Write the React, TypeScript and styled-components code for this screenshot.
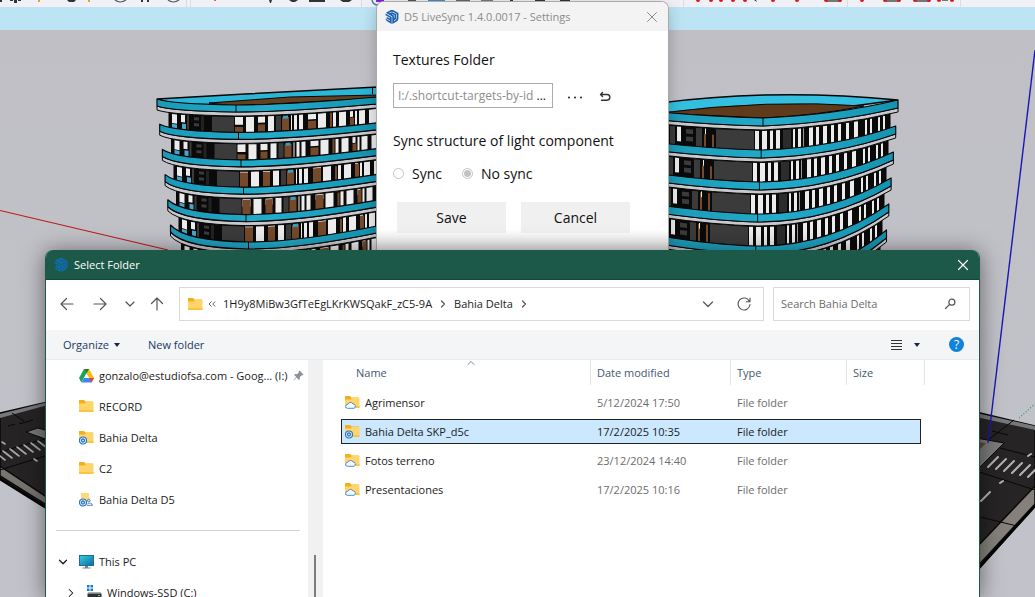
import React from 'react';
import styled, { createGlobalStyle } from 'styled-components';
import { SiSketchup } from 'react-icons/si';

const GlobalStyle = createGlobalStyle`
  *, *::before, *::after { box-sizing: border-box; }
  body { margin: 0; background: #c0c0c6; font-family: "Open Sans", "Noto Sans", sans-serif; font-size: 11px; line-height: 16px; color: #1b1b1b; }
  button, input { font: inherit; color: inherit; }
  button { border: 0; padding: 0; background: none; cursor: pointer; }
`;

const Desktop = styled.div`
  position: relative;
  height: 100vh;
  overflow: hidden;
`;

const Scene = styled.svg`
  display: block;
  width: 100%;
  height: 100%;
`;

/* ---------- 3D viewport ---------- */

type Point = [number, number];
type Curve = [Point, Point, Point];

const at = (c: Curve, x: number): Point => {
  let lo = 0;
  let hi = 1;
  for (let i = 0; i < 20; i++) {
    const t = (lo + hi) / 2;
    const px = (1 - t) * (1 - t) * c[0][0] + 2 * t * (1 - t) * c[1][0] + t * t * c[2][0];
    if (px < x) lo = t;
    else hi = t;
  }
  const t = lo;
  return [x, (1 - t) * (1 - t) * c[0][1] + 2 * t * (1 - t) * c[1][1] + t * t * c[2][1]];
};

const ribbon = (a: Curve, b: Curve, top: number, bottom: number) => {
  const p = (q: Point, d: number) => `${q[0]} ${q[1] + d}`;
  return `M${p(a[0], top)} Q${p(a[1], top)} ${p(a[2], top)} Q${p(b[1], top)} ${p(b[2], top)} L${p(b[2], bottom)} Q${p(b[1], bottom)} ${p(b[0], bottom)} Q${p(a[1], bottom)} ${p(a[0], bottom)} Z`;
};

type Pane = [x: number, w: number, fill: string, from: number, to: number];
const W = '#ececec';
const B = '#75492a';
const G = '#3b3b3b';

const leftPanes: Pane[] = [
  [172, 5, W, 0, 0.65], [172, 5, '#4aa5c8', 0.7, 1], [181, 4, W, 0, 0.5], [182, 4, '#4aa5c8', 0.6, 1],
  [187, 2, G, 0, 1], [194, 5, G, 0.1, 0.3], [194, 5, G, 0.5, 0.7], [201, 3, '#222', 0, 1], [212, 22, G, 0, 1],
  [235, 8, W, 0, 0.5], [235, 8, B, 0.65, 1], [246, 8, W, 0, 1], [258, 7, W, 0, 0.4], [258, 7, B, 0.5, 1],
  [268, 6, W, 0, 1], [276, 5, G, 0, 1], [282, 7, B, 0.1, 1], [283, 5, '#389bb8', 0, 0.2], [291, 1, W, 0, 1], [294, 3, W, 0, 1], [299, 4, W, 0, 1],
  [308, 8, W, 0, 0.35], [308, 8, B, 0.45, 1], [318, 8, W, 0, 1], [330, 2, B, 0, 1], [333, 3, W, 0, 1],
  [339, 7, W, 0, 1], [350, 3, W, 0, 0.4], [350, 4, B, 0.45, 1], [355, 2, W, 0, 1], [359, 6, W, 0, 1], [369, 7, W, 0, 1],
];

const rightPanes: Pane[] = [
  [670, 5, G, 0, 1], [677, 4, W, 0, 0.8], [686, 7, G, 0.1, 0.35], [686, 7, G, 0.5, 0.75], [696, 6, G, 0, 1],
  [704, 2, B, 0.3, 1], [712, 2, B, 0.3, 1], [705, 1, W, 0, 0.3], [716, 38, G, 0, 1], [755, 4, W, 0, 1], [762, 5, W, 0, 1],
  [770, 3, W, 0, 1], [776, 4, W, 0, 1], [783, 8, '#2c2c2c', 0, 1], [793, 2, W, 0, 1], [798, 3, W, 0, 1], [803, 1, '#999', 0, 1],
  [809, 4, W, 0, 1], [816, 3, W, 0, 1], [823, 4, W, 0, 1], [831, 3, W, 0, 1], [838, 3, W, 0, 1],
  [846, 3, W, 0, 1], [854, 4, W, 0, 1], [865, 2, W, 0, 1], [870, 2, W, 0, 1], [878, 2, W, 0, 1], [883, 2, W, 0, 1],
];

const leftFloor = (k: number): [Curve, Curve] => {
  const l: Point = [157 + 2.7 * k, 99 + 25.2 * k];
  const c: Point = [236 + 2.5 * k, 105 + 27.4 * k];
  const r: Point = [377, 97 + 25.8 * k];
  return [
    [l, [l[0] + 14, c[1] - 1], c],
    [c, [c[0] + 50, c[1]], r],
  ];
};

const rightFloor = (k: number): [Curve, Curve] => {
  const l: Point = [660, 112 + 31 * k];
  const c: Point = [763 - 1.8 * k, 118 + 32 * k];
  const r: Point = [898 - 2.3 * k, 100 + 26 * k];
  return [
    [l, [715, c[1] - 1], c],
    [c, [c[0] + 72, c[1] - 3 + k], r],
  ];
};

interface TowerProps {
  floor: (k: number) => [Curve, Curve];
  panes: Pane[];
  shift: number;
  wall: [number, number];
  band: number;
}

function Tower({ floor, panes, shift, wall, band }: TowerProps) {
  const floors = [0, 1, 2, 3, 4, 5];
  const yAt = (k: number, x: number) => {
    const [a, b] = floor(k);
    return x < a[2][0] ? at(a, x)[1] : at(b, x)[1];
  };
  return (
    <g stroke="#060606" strokeLinejoin="round">
      {floors.map((k) => {
        const x0 = wall[0] + shift * k;
        const x1 = wall[1] + Math.min(shift, 0) * k;
        const xs = Array.from({ length: 13 }, (_, i) => x0 + ((x1 - x0) * i) / 12);
        const pts = [
          ...xs.map((x) => `${x},${yAt(k, x) + band}`),
          ...xs.slice().reverse().map((x) => `${x},${yAt(k + 1, x) + 3}`),
        ].join(' ');
        return (
          <g key={k}>
            <polygon points={pts} fill="#0a0a0a" />
            {panes.map(([px, w, fill, from, to], i) => {
              const x = px + shift * k;
              const e = Math.min(x + w, x1);
              if (e <= x) return null;
              const start = fill === B && k > 1 ? 0.05 : from;
              const edge = (q: number, f: number) => {
                const t = yAt(k, q) + band + 5;
                const b = yAt(k + 1, q);
                return t + (b - t) * f;
              };
              return (
                <polygon
                  key={i}
                  stroke="none"
                  fill={fill}
                  points={`${x},${edge(x, start)} ${e},${edge(e, start)} ${e},${edge(e, to)} ${x},${edge(x, to)}`}
                />
              );
            })}
          </g>
        );
      })}
      {floors.map((k) => {
        const [a, b] = floor(k);
        return (
          <g key={k}>
            <path d={ribbon(a, b, band, band + 4)} fill="#c9c8cc" strokeWidth="1" />
            <path d={ribbon(a, b, 0, band)} fill="url(#band)" strokeWidth="1.2" />
            <path d={`M${a[2][0]} ${a[2][1]}v${band}`} strokeWidth="1" />
          </g>
        );
      })}
    </g>
  );
}

const leftBars = [0, 1, 2, 3, 4, 5, 6];
const rightBars = [0, 1, 2, 3, 4, 5, 6, 7];
const redDots = [698, 711, 721, 733, 745, 773, 797, 826, 840, 862, 885, 899, 915, 929, 939, 952];

function Viewport() {
  return (
    <Scene viewBox="0 0 1035 597" preserveAspectRatio="xMidYMin slice" aria-hidden="true">
      <defs>
        <linearGradient id="ground" x1="0" y1="0" x2="0" y2="1">
          <stop offset="0" stopColor="#bfbfc5" />
          <stop offset="1" stopColor="#c2c2ca" />
        </linearGradient>
        <linearGradient id="band" x1="0" y1="0" x2="1" y2="0">
          <stop offset="0" stopColor="#1a9ab8" />
          <stop offset="0.5" stopColor="#23abca" />
          <stop offset="1" stopColor="#1493b0" />
        </linearGradient>
      </defs>
      <rect width="1035" height="597" fill="url(#ground)" />
      <rect y="7" width="1035" height="23" fill="#bde4f4" />
      <rect width="1035" height="7" fill="#f1f0f6" />
      <path d="M186.500 0v7M190.500 0v7M361.500 0v7M683.500 0v7M847.500 0v7M960.500 0v7" stroke="#dcdbe1" />
      <g fill="#333">
        <path d="M0 0h2v2H0zM10 0h3v1h-3zM14 0h3v3h-3zM18 0h3v1h-3zM67 0h9l-2 2h-5zM141 0h2v2h-2zM147 0h2v2h-2zM269 0h3l-1 3h-1zM289 0h9l-3 2h-3zM309 0h16v2h-16zM340 0h12l-3 2h-6z" />
        <path d="M115 0q5 4 11 0M168 0q5 4 11 0" fill="none" stroke="#555" strokeWidth="1.200" />
        <path d="M826 0h15v2h-15zM886 0h14v2h-14zM916 0h14v2h-14zM942 0h6v1h-6z" fill="#777" />
        <path d="M754 0l3 2-1-2z" />
      </g>
      <path d="M39 0v2M89 0v2" stroke="#f0a020" strokeWidth="2" />
      <circle cx="215" cy="0" r="1" fill="#d32" />
      <path d="M372 0q1 6 8 5" fill="none" stroke="#3e7fc4" strokeWidth="1.500" />
      <g fill="#333">
        <rect x="376" width="8" height="2" fill="#8a1be0" />
        <rect x="408" width="8" height="1" fill="#555" />
        <rect x="428" width="17" height="2" fill="#4a86c8" />
        <rect x="456" width="14" height="1" fill="#666" />
        <rect x="481" width="12" height="1" fill="#777" />
        <rect x="510" width="3" height="1" />
        <rect x="535" width="10" height="1" />
        <rect x="560" width="10" height="1" />
      </g>
      <g fill="#e01414">
        {redDots.map((x) => <circle key={x} cx={x} cy="0" r="2" />)}
      </g>

      <path d="M0 210.500L168 250" stroke="#c01818" strokeWidth="1.200" />

      <path d="M157 99L245 94L377 87V97L236 105L175 104Z" fill="#2bb5d6" stroke="#060606" strokeWidth="1.500" />
      <path d="M209 103L290 97L377 95V98L236 106Z" fill="#65401f" stroke="#060606" />
      <Tower floor={leftFloor} panes={leftPanes} shift={2.5} wall={[169, 377]} band={7} />
      <path d="M372.500 88v6" stroke="#060606" />

      <path d="M660 103Q775 88 898 100L763 118L660 112Z" fill="#34bfe0" stroke="#060606" strokeWidth="1.500" />
      <path d="M660 113Q770 99 864 106Q820 115 763 118Z" fill="#5f3a1b" stroke="#060606" />
      <Tower floor={rightFloor} panes={rightPanes} shift={-2} wall={[660, 890]} band={8} />

      <path d="M0 413L48 402V508L0 479Z" fill="#262325" stroke="#0a0a0a" strokeWidth="1.500" />
      <path d="M0 414L48 402V405L0 418Z" fill="#77787a" />
      <path d="M26 432L38 428L48 431V440Z" fill="#77787a" stroke="#0a0a0a" />
      <path d="M0 466L48 498V506L0 476Z" fill="#77736f" stroke="#0a0a0a" strokeWidth="1.500" />
      <path d="M0 479L48 509" stroke="#050505" strokeWidth="2.500" />
      <path d="M0 452L48 438M0 470L48 455M12 413L24 421M8 426l7-2M19 424l14-4" stroke="#080808" />
      <g stroke="#a8a8ab" strokeWidth="1.600" strokeLinecap="round">
        {leftBars.map((i) => <path key={i} d={`M${-4 + i * 7} ${453 - i * 2}l9 7`} />)}
        <path d="M34 459l3 2M2 442l3 2" />
      </g>

      <path d="M976 412L1035 426V506L976 572Z" fill="#272426" stroke="#0a0a0a" strokeWidth="1.500" />
      <path d="M976 413L1035 426V430L976 417Z" fill="#77787a" />
      <path d="M976 438L1004 443L978 469L976 467Z" fill="#7b7b7c" stroke="#0a0a0a" />
      <path d="M976 442L986 443L980 449H976Z" fill="#66472c" />
      <path d="M1035 486L976 548V568L1035 504Z" fill="#85807b" stroke="#0a0a0a" strokeWidth="1.500" />
      <path d="M1035 506L976 571" stroke="#050505" strokeWidth="2.500" />
      <path d="M988 440L1014 420M1000 448L1035 457M976 471L1035 490M980 517L1017 526M992 431l16 4" stroke="#080808" />
      <g stroke="#b4b4b7" strokeWidth="2" strokeLinecap="round">
        {rightBars.map((i) => <path key={i} d={`M${988 + i * 8} ${467 + i * 2}l10-10`} />)}
        <path d="M981 501l9-9M1000 483l3-2M1028 456l3-2" />
      </g>
      <path d="M1035 50L988 443" stroke="#1818b4" strokeWidth="1.400" />
      <path d="M1019 418L1035 404" stroke="#18a04a" strokeWidth="1.200" strokeDasharray="1 2" />
    </Scene>
  );
}

/* ---------- Icons ---------- */

const Glyph = styled.svg<{ $weight: number }>`
  display: block;
  flex: none;
  fill: none;
  stroke: currentColor;
  stroke-width: ${(p) => p.$weight};
  stroke-linecap: round;
  stroke-linejoin: round;
`;

function Icon({ d, size = 16, weight = 1.2 }: { d: string; size?: number; weight?: number }) {
  return (
    <Glyph width={size} height={size} viewBox="0 0 16 16" aria-hidden="true" $weight={weight}>
      <path d={d} />
    </Glyph>
  );
}

const arrowLeft = 'M14 8H2M7.500 2.500L2 8l5.500 5.500';
const arrowRight = 'M2 8h12M8.500 2.500L14 8l-5.500 5.500';
const arrowUp = 'M8 14V2M2.500 7.500L8 2l5.500 5.500';
const chevronDown = 'M4 6l4 4 4-4';
const chevronRight = 'M6 4l4 4-4 4';
const cross = 'M3.500 3.500l9 9M12.500 3.500l-9 9';

type Badge = 'none' | 'sync' | 'cloud' | 'shared';

function Folder({ badge = 'none' }: { badge?: Badge }) {
  return (
    <svg width="15" height="15" viewBox="0 0 15 15" aria-hidden="true">
      {badge === 'shared' ? (
        <>
          <path d="M2 1h8v3l1 6H2z" fill="#ffd97a" />
          <path d="M8.500 8.500a1.300 1.300 0 102.600 0 1.300 1.300 0 00-2.600 0M8 13.300h5.500c-.3-2.400-3.500-2.800-5-1.500" fill="none" stroke="#5a83b8" />
        </>
      ) : (
        <>
          <path d="M0 1h5l1.500 1.500H14V7H0z" fill="#f3af1b" />
          <path d="M0 4.500h5.500L7 3h7.500v10H0z" fill="#ffd569" />
          <path d="M0 11h14.500v2H0z" fill="#fbc544" />
        </>
      )}
      {(badge === 'sync' || badge === 'shared') && (
        <>
          <circle cx="4" cy="10.500" r="3.500" fill="#eaf3fc" stroke="#2777cf" strokeWidth="1.200" />
          <circle cx="4" cy="10.500" r="1.500" fill="none" stroke="#2777cf" strokeWidth="1.300" />
        </>
      )}
      {badge === 'cloud' && (
        <path d="M2.500 13.300a2 2 0 01.2-4 3 3 0 015.300-.4 2.300 2.300 0 011 4.400z" fill="#f5faff" stroke="#4a8fd8" />
      )}
    </svg>
  );
}

function DriveLogo() {
  return (
    <svg width="15" height="14" viewBox="0 0 15 14" aria-hidden="true">
      <path d="M5 0h5L4 10.500 2.300 13.500 0 9z" fill="#1ca45c" />
      <path d="M5 0h5l5 9h-5z" fill="#fbbc05" />
      <path d="M5 0h5L7.500 4.500z" fill="#188038" />
      <path d="M5 9h10l-2.500 4.500h-10z" fill="#4285f4" />
      <path d="M10.300 9H15l-2.500 4.500z" fill="#ea4335" />
      <path d="M7.500 4.700L10 9H5z" fill="#fff" />
    </svg>
  );
}

function Monitor() {
  return (
    <svg width="15" height="14" viewBox="0 0 15 14" aria-hidden="true">
      <defs>
        <linearGradient id="screen" x1="0" y1="0" x2="1" y2="1">
          <stop offset="0" stopColor="#35d0dc" />
          <stop offset="1" stopColor="#0c68a8" />
        </linearGradient>
      </defs>
      <rect x="0.500" y="0.500" width="14" height="10" fill="url(#screen)" stroke="#1c6f93" />
      <path d="M6 11h3v1.500h2.500v1h-8v-1H6z" fill="#76818c" />
    </svg>
  );
}

function Drive() {
  return (
    <svg width="15" height="15" viewBox="0 0 15 15" aria-hidden="true">
      <path d="M0 0h2.500v2.500H0zM3.500 0H6v2.500H3.500zM0 3.500h2.500V6H0zM3.500 3.500H6V6H3.500z" fill="#0f7bd8" />
      <path d="M1.500 7h12l1 1.500H.5z" fill="#aab0b5" />
      <path d="M.5 8.500h14V12H.5z" fill="#2e3032" />
      <path d="M11 10h2v1h-2z" fill="#4fe07a" />
    </svg>
  );
}

function Pin() {
  return (
    <svg width="11" height="11" viewBox="0 0 11 11" aria-hidden="true">
      <path d="M6.500.5l4 4-1 .8-1 .1-1.700 1.700.1 2-1 .8L3.600 7.500.700 10.500l.2-1L3.200 7 1.200 5l.8-1 2 .2 1.800-1.800V1.300z" fill="#8b9198" />
    </svg>
  );
}

/* ---------- Settings dialog ---------- */

const SettingsWindow = styled.section`
  position: absolute;
  top: 2px;
  left: 377px;
  width: 291px;
  height: 260px;
  border-radius: 7px 7px 0 0;
  background: linear-gradient(#fff 228px, #e4e4e4 250px);
  box-shadow: 0 0 0 1px #a9a9ac, 0 4px 16px rgba(0, 0, 0, 0.25);
  overflow: hidden;
`;

const SettingsTitle = styled.header`
  display: flex;
  align-items: center;
  gap: 5px;
  height: 29px;
  padding: 0 8px;
  background: #f3f3f3;
  color: #8b8b8b;

  h1 { flex: 1; margin: 0; font: inherit; }
  svg { flex: none; }
`;

const SettingsForm = styled.form`
  display: flex;
  flex-direction: column;
  padding: 18px 16px 0;
  font-size: 14px;
  line-height: 22px;
  color: #111;
`;

const PathRow = styled.div`
  display: flex;
  align-items: center;
  gap: 14px;
  margin: 12px 0 22px;
`;

const PathBox = styled.div`
  display: flex;
  align-items: center;
  width: 160px;
  height: 25px;
  padding: 0 6px 0 4px;
  border: 1px solid #ababab;
  font-size: 12px;

  input { flex: 1; min-width: 0; padding: 0; border: 0; background: none; color: #8d8d8d; outline: 0; }
`;

const PathButton = styled.button`
  display: flex;
  padding-top: 2px;
  color: #333;
`;

const Choices = styled.fieldset`
  display: flex;
  gap: 20px;
  margin: 0;
  padding: 0;
  border: 0;

  legend { padding: 0; margin-bottom: 11px; }
`;

const Choice = styled.label`
  display: flex;
  align-items: center;
  gap: 8px;
`;

const Radio = styled.input`
  appearance: none;
  width: 11px;
  height: 11px;
  margin: 0 0 2px;
  border: 1px solid #c4c4c4;
  border-radius: 50%;
  background: #fff;

  &:checked { background: radial-gradient(#c2c2c2 0 3px, #fff 4px); }
`;

const Actions = styled.div`
  display: flex;
  gap: 15px;
  padding: 17px 0 0 4px;
`;

const ActionButton = styled.button`
  width: 109px;
  height: 31px;
  background: #f0f0f0;
`;

/* ---------- Folder dialog ---------- */

const FolderWindow = styled.section`
  position: absolute;
  top: 250px;
  left: 45px;
  right: 55px;
  bottom: 0;
  display: flex;
  flex-direction: column;
  border: 1px solid #1d5949;
  border-width: 0 1px;
  border-radius: 8px 8px 0 0;
  background: #fff;
  box-shadow: 0 2px 22px rgba(0, 0, 0, 0.5);
  overflow: hidden;
`;

const FolderTitle = styled.header`
  display: flex;
  align-items: center;
  gap: 6px;
  flex: none;
  height: 30px;
  padding: 0 8px;
  background: #1d5949;
  border-bottom: 1px solid #164638;
  color: #fff;

  h2 { flex: 1; margin: 0; font: inherit; }
`;

const NavRow = styled.nav`
  display: flex;
  align-items: center;
  flex: none;
  height: 50px;
  padding: 0 9px 2px 10px;
  color: #555;
`;

const NavButtons = styled.div`
  display: flex;
  gap: 11px;
  width: 123px;
`;

const NavButton = styled.button<{ $wide?: boolean }>`
  display: flex;
  justify-content: center;
  width: ${(p) => (p.$wide ? 22 : 16)}px;
`;

const AddressBar = styled.div`
  display: flex;
  align-items: center;
  flex: 1;
  height: 34px;
  margin-right: 9px;
  padding: 0 11px 0 8px;
  border: 1px solid #d9d9d9;
`;

const Crumbs = styled.div`
  display: flex;
  align-items: center;
  flex: 1;
  gap: 5px;
  margin-left: 3px;

  button { color: #1b1b1b; }
`;

const TrailingButtons = styled.div`
  display: flex;
  gap: 20px;
`;

const SearchBox = styled.label`
  display: flex;
  align-items: center;
  width: 197px;
  height: 34px;
  padding: 0 13px 0 7px;
  border: 1px solid #d9d9d9;

  input { flex: 1; min-width: 0; padding: 0; border: 0; outline: 0; }
  input::placeholder { color: #6b6b6b; opacity: 1; }
`;

const CommandBar = styled.div`
  display: flex;
  align-items: center;
  flex: none;
  height: 30px;
  padding: 0 15px 0 17px;
  background: #f4f5f7;
  border-bottom: 1px solid #e9eaec;
  color: #1c3a63;
`;

const Command = styled.button`
  display: flex;
  align-items: center;
  gap: 5px;
  margin-right: 28px;
`;

const Caret = styled.span`
  border: 3px solid transparent;
  border-top: 4px solid #14244f;
  border-bottom: 0;
`;

const Spacer = styled.div`
  flex: 1;
`;

const ViewButton = styled.button`
  display: flex;
  align-items: center;
  gap: 12px;
  margin-right: 29px;
`;

const HelpButton = styled.button`
  width: 15px;
  height: 15px;
  border-radius: 50%;
  background: #1183dc;
  color: #fff;
  font-size: 12px;
  line-height: 15px;
`;

const Panes = styled.div`
  display: flex;
  flex: 1;
  min-height: 0;
`;

const Sidebar = styled.aside`
  width: 262px;
  overflow: hidden;
`;

const TreeItem = styled.button<{ $child?: boolean }>`
  display: flex;
  align-items: center;
  gap: 5px;
  width: 100%;
  height: 31px;
  padding-left: ${(p) => (p.$child ? 16 : 8)}px;
  white-space: nowrap;
`;

const Twist = styled.span`
  display: flex;
  width: 20px;
  padding-left: 2px;
`;

const Pinned = styled.span`
  display: flex;
`;

const Divider = styled.hr`
  height: 1px;
  margin: 15px 8px 15px 10px;
  border: 0;
  background: #d3d3d3;
`;

const ScrollTrack = styled.div`
  width: 15px;
  padding: 195px 6px 0;
  background: #f1f1f1;
`;

const ScrollThumb = styled.div`
  height: 100%;
  width: 2px;
  background: #7d7d7d;
`;

const Listing = styled.main`
  position: relative;
  flex: 1;
  margin-left: 2px;
  padding-left: 16px;
  overflow: hidden;
`;

const SortMark = styled.span`
  position: absolute;
  top: 0;
  left: 140px;
  color: #777;
`;

const FileTable = styled.table`
  width: 584px;
  table-layout: fixed;
  border-collapse: separate;
  border-spacing: 0;
  text-align: left;

  th {
    height: 30px;
    padding: 0 0 4px 6px;
    font-weight: 400;
    color: #44586f;
    background: linear-gradient(#e3e3e3, #e3e3e3) right top / 1px 25px no-repeat;
  }
  th:first-child { padding-left: 15px; }
`;

const FileRow = styled.tr<{ $selected: boolean }>`
  td {
    height: 29px;
    padding: 0 0 0 6px;
    border-bottom: 4px solid transparent;
    background: ${(p) => (p.$selected ? '#cce8ff' : 'transparent')} padding-box;
    color: ${(p) => (p.$selected ? '#1b1b1b' : '#6d6d6d')};
    box-shadow: ${(p) => (p.$selected ? 'inset 0 1px #222, inset 0 -1px #222' : 'none')};
  }
  td:first-child {
    padding-left: 4px;
    color: #1b1b1b;
    box-shadow: ${(p) => (p.$selected ? 'inset 1px 1px #222, inset 0 -1px #222' : 'none')};
  }
  td:last-child {
    border-right: 4px solid transparent;
    box-shadow: ${(p) => (p.$selected ? 'inset -1px -1px #222, inset 0 1px #222' : 'none')};
  }
`;

const FileName = styled.span`
  display: flex;
  align-items: center;
  gap: 5px;
`;

const files: { name: string; date: string; badge: Badge; selected?: boolean }[] = [
  { name: 'Agrimensor', date: '5/12/2024 17:50', badge: 'cloud' },
  { name: 'Bahia Delta SKP_d5c', date: '17/2/2025 10:35', badge: 'sync', selected: true },
  { name: 'Fotos terreno', date: '23/12/2024 14:40', badge: 'cloud' },
  { name: 'Presentaciones', date: '17/2/2025 10:16', badge: 'cloud' },
];

const quickFolders: { name: string; badge: Badge }[] = [
  { name: 'RECORD', badge: 'none' },
  { name: 'Bahia Delta', badge: 'sync' },
  { name: 'C2', badge: 'none' },
  { name: 'Bahia Delta D5', badge: 'shared' },
];

function Settings() {
  return (
    <SettingsWindow aria-label="Settings">
      <SettingsTitle>
        <SiSketchup size={14} color="#1b5fae" />
        <h1>D5 LiveSync 1.4.0.0017 - Settings</h1>
        <button type="button" aria-label="Close settings"><Icon d={cross} weight={1} /></button>
      </SettingsTitle>
      <SettingsForm onSubmit={(e) => e.preventDefault()}>
        <label htmlFor="textures">Textures Folder</label>
        <PathRow>
          <PathBox>
            <input id="textures" readOnly value="I:/.shortcut-targets-by-id" />
            <span>...</span>
          </PathBox>
          <PathButton type="button" aria-label="Browse">
            <svg width="16" height="16" viewBox="0 0 16 16" fill="#222">
              <circle cx="2" cy="8.500" r="1" /><circle cx="8" cy="8.500" r="1" /><circle cx="14" cy="8.500" r="1" />
            </svg>
          </PathButton>
          <PathButton type="button" aria-label="Reset">
            <Icon d="M5.500 3.500L3.500 5.500 5.500 7.500M3.500 5.500H10a2.800 2.800 0 010 5.700H4.500" weight={1.4} />
          </PathButton>
        </PathRow>
        <Choices>
          <legend>Sync structure of light component</legend>
          <Choice><Radio type="radio" name="sync" />Sync</Choice>
          <Choice><Radio type="radio" name="sync" defaultChecked />No sync</Choice>
        </Choices>
        <Actions>
          <ActionButton type="submit">Save</ActionButton>
          <ActionButton type="button">Cancel</ActionButton>
        </Actions>
      </SettingsForm>
    </SettingsWindow>
  );
}

function FolderPicker() {
  return (
    <FolderWindow aria-label="Select Folder">
      <FolderTitle>
        <SiSketchup size={14} color="#0f6cb0" />
        <h2>Select Folder</h2>
        <button type="button" aria-label="Close"><Icon d={cross} /></button>
      </FolderTitle>
      <NavRow>
        <NavButtons>
          <NavButton type="button" $wide aria-label="Back"><Icon d={arrowLeft} /></NavButton>
          <NavButton type="button" $wide aria-label="Forward"><Icon d={arrowRight} /></NavButton>
          <NavButton type="button" aria-label="Recent"><Icon d={chevronDown} /></NavButton>
          <NavButton type="button" aria-label="Up"><Icon d={arrowUp} /></NavButton>
        </NavButtons>
        <AddressBar>
          <Folder />
          <Crumbs>
            <Icon d="M7 5L4 8l3 3M12 5L9 8l3 3" size={12} />
            <button type="button">1H9y8MiBw3GfTeEgLKrKWSQakF_zC5-9A</button>
            <Icon d={chevronRight} size={12} weight={1.6} />
            <button type="button">Bahia Delta</button>
            <Icon d={chevronRight} size={12} weight={1.6} />
          </Crumbs>
          <TrailingButtons>
            <button type="button" aria-label="History"><Icon d="M3.500 6L8 10.500 12.500 6" /></button>
            <button type="button" aria-label="Refresh">
              <Icon d="M13.500 5.500A6 6 0 1014 8.500M14 2v3.700h-3.700" weight={1.1} />
            </button>
          </TrailingButtons>
        </AddressBar>
        <SearchBox>
          <input type="text" aria-label="Search" placeholder="Search Bahia Delta" />
          <Icon d="M7.500 8.500L2 14M14.500 5.500a4 4 0 11-8 0 4 4 0 018 0z" size={12} weight={1.6} />
        </SearchBox>
      </NavRow>
      <CommandBar>
        <Command type="button">Organize<Caret /></Command>
        <Command type="button">New folder</Command>
        <Spacer />
        <ViewButton type="button" aria-label="Change view">
          <svg width="11" height="12" viewBox="0 0 11 12" stroke="#333">
            <path d="M0 1.500h11M0 4.500h11M0 7.500h11M0 10.500h11" />
          </svg>
          <Caret />
        </ViewButton>
        <HelpButton type="button">?</HelpButton>
      </CommandBar>
      <Panes>
        <Sidebar>
          <TreeItem type="button">
            <Twist />
            <DriveLogo />
            gonzalo@estudiofsa.com - Goog... (I:)
            <Pinned><Pin /></Pinned>
          </TreeItem>
          {quickFolders.map((f) => (
            <TreeItem type="button" key={f.name}><Twist /><Folder badge={f.badge} />{f.name}</TreeItem>
          ))}
          <Divider />
          <TreeItem type="button">
            <Twist><Icon d={chevronDown} size={14} weight={1.5} /></Twist>
            <Monitor />
            This PC
          </TreeItem>
          <TreeItem type="button" $child>
            <Twist><Icon d={chevronRight} size={14} /></Twist>
            <Drive />
            Windows-SSD (C:)
          </TreeItem>
        </Sidebar>
        <ScrollTrack><ScrollThumb /></ScrollTrack>
        <Listing>
          <SortMark><Icon d="M4 6L8 2l4 4" size={12} /></SortMark>
          <FileTable>
            <colgroup>
              <col style={{ width: 250 }} /><col style={{ width: 140 }} /><col style={{ width: 116 }} /><col style={{ width: 78 }} />
            </colgroup>
            <thead>
              <tr><th>Name</th><th>Date modified</th><th>Type</th><th>Size</th></tr>
            </thead>
            <tbody>
              {files.map((f) => (
                <FileRow key={f.name} $selected={!!f.selected}>
                  <td><FileName><Folder badge={f.badge} />{f.name}</FileName></td>
                  <td>{f.date}</td>
                  <td>File folder</td>
                  <td />
                </FileRow>
              ))}
            </tbody>
          </FileTable>
        </Listing>
      </Panes>
    </FolderWindow>
  );
}

export default function App() {
  return (
    <Desktop>
      <GlobalStyle />
      <Viewport />
      <Settings />
      <FolderPicker />
    </Desktop>
  );
}
